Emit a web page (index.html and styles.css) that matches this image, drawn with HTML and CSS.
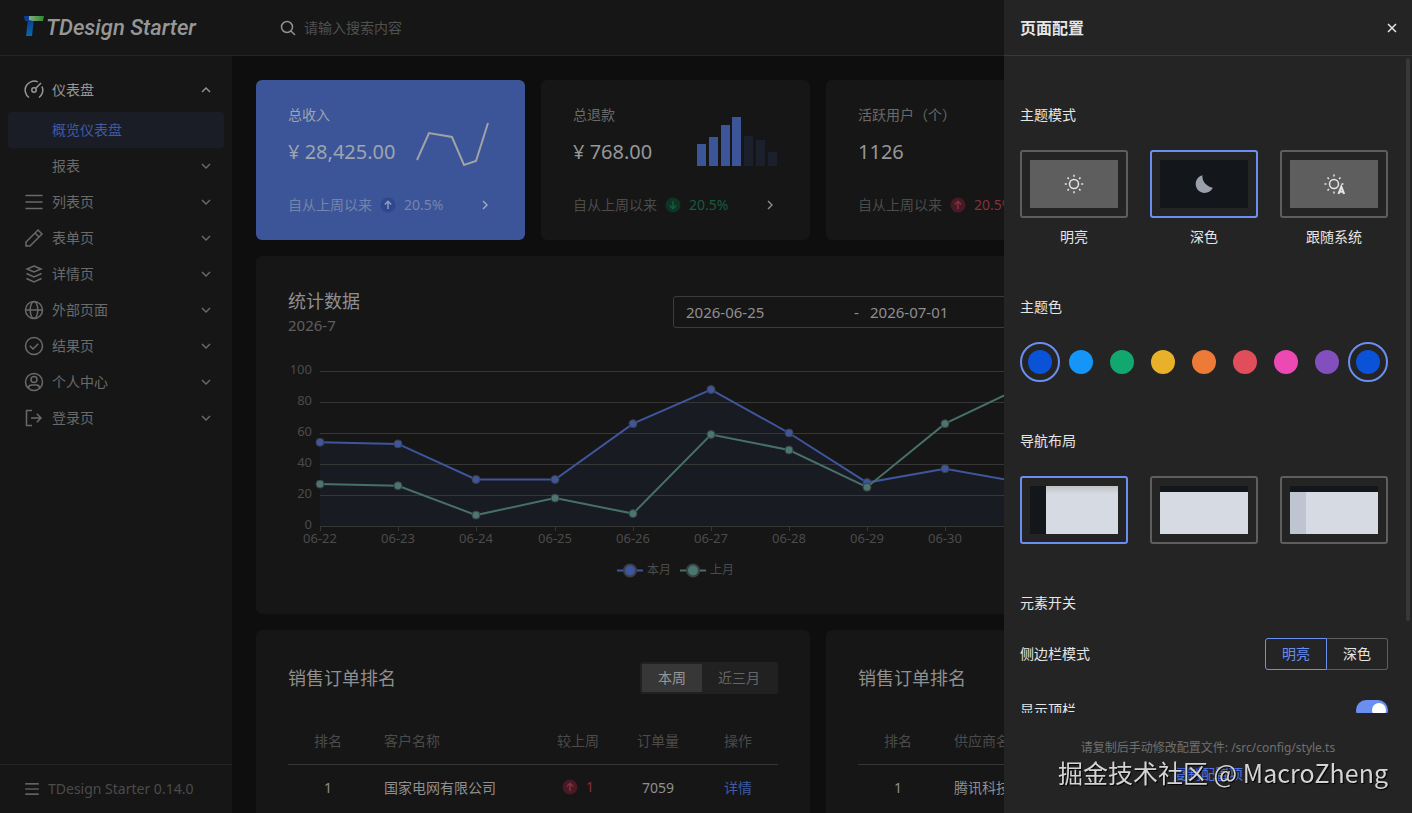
FILE: index.html
```html
<!DOCTYPE html>
<html lang="zh-CN">
<head>
    <meta charset="UTF-8">
    <meta name="viewport" content="width=device-width, initial-scale=1.0">
    <title>TDesign Starter</title>
    <link rel="stylesheet" href="styles.css">
</head>
<body>
    <svg class="sprite" aria-hidden="true">
        <symbol id="i-down" viewBox="0 0 16 16"><path d="M4 6l4 4 4-4"/></symbol>
        <symbol id="i-up" viewBox="0 0 16 16"><path d="M4 10l4-4 4 4"/></symbol>
        <symbol id="i-right" viewBox="0 0 16 16"><path d="M6 4l4 4-4 4"/></symbol>
        <symbol id="i-menu" viewBox="0 0 20 20"><path d="M1.500 3.500h17M1.500 10h17M1.500 16.500h17"/></symbol>
        <symbol id="i-arrow-up" viewBox="0 0 16 16"><circle cx="8" cy="8" r="7.500" class="disc"/><path d="M8 12V4.500M4.800 7.500L8 4.300l3.200 3.200"/></symbol>
        <symbol id="i-arrow-down" viewBox="0 0 16 16"><circle cx="8" cy="8" r="7.500" class="disc"/><path d="M8 4v7.500M4.800 8.500L8 11.700l3.200-3.200"/></symbol>
        <symbol id="i-sun" viewBox="0 0 20 20"><circle cx="10" cy="10" r="4.500"/><path d="M10 .8v2M10 17.200v2M.8 10h2M17.200 10h2M3.500 3.500l1.400 1.400M15.100 15.100l1.400 1.400M3.500 16.500l1.400-1.400M15.100 4.900l1.400-1.400"/></symbol>
    </svg>

    <header class="header">
        <a class="logo" href="#">
            <svg width="22" height="24" viewBox="0 0 22 24" aria-hidden="true">
                <defs>
                    <linearGradient id="stem" x1="0" y1="0" x2="0" y2="1">
                        <stop offset="0" stop-color="#0f3a94"/>
                        <stop offset="1" stop-color="#0a68a8"/>
                    </linearGradient>
                    <linearGradient id="bar" x1="0" y1="0" x2="1" y2="0">
                        <stop offset="0" stop-color="#86a886"/>
                        <stop offset="1" stop-color="#2c8a28"/>
                    </linearGradient>
                </defs>
                <path d="M0 0h7v5H1z" fill="#0b3e92"/>
                <path d="M4 3h6L8 20H2z" fill="url(#stem)"/>
                <path d="M5 0h15l-1 5H9L5 4z" fill="url(#bar)"/>
            </svg>
            <span>TDesign Starter</span>
        </a>
        <label class="search">
            <svg width="16" height="16" viewBox="0 0 16 16" aria-hidden="true"><circle cx="7" cy="7" r="5.500"/><path d="M11 11l4 4"/></svg>
            <input type="text" placeholder="请输入搜索内容" aria-label="请输入搜索内容">
        </label>
    </header>

    <div class="layout">
        <aside class="sidebar">
            <nav class="menu">
                <a class="menu-item open" href="#">
                    <svg class="icon" viewBox="0 0 20 20"><path d="M5 17.500A9 9 0 0 1 13.800 1.900M18 6.500a9 9 0 0 1-3 11M11.500 8.500L17 3"/><circle cx="10" cy="10" r="2.200"/></svg>
                    <span>仪表盘</span>
                    <svg class="chevron"><use href="#i-up"/></svg>
                </a>
                <a class="menu-item sub active" href="#"><span>概览仪表盘</span></a>
                <a class="menu-item sub" href="#"><span>报表</span><svg class="chevron"><use href="#i-down"/></svg></a>
                <a class="menu-item" href="#">
                    <svg class="icon"><use href="#i-menu"/></svg>
                    <span>列表页</span>
                    <svg class="chevron"><use href="#i-down"/></svg>
                </a>
                <a class="menu-item" href="#">
                    <svg class="icon" viewBox="0 0 20 20"><path d="M2 18v-4L14 2l4 4L6 18zM11 5l4 4"/></svg>
                    <span>表单页</span>
                    <svg class="chevron"><use href="#i-down"/></svg>
                </a>
                <a class="menu-item" href="#">
                    <svg class="icon" viewBox="0 0 20 20"><path d="M10 2l7 3-7 3-7-3zM2.500 9.500L10 13l7.500-3.500M2.500 14.500L10 18l7.500-3.500"/></svg>
                    <span>详情页</span>
                    <svg class="chevron"><use href="#i-down"/></svg>
                </a>
                <a class="menu-item" href="#">
                    <svg class="icon" viewBox="0 0 20 20"><circle cx="10" cy="10" r="8.500"/><ellipse cx="10" cy="10" rx="3.800" ry="8.500"/><path d="M1.500 10h17"/></svg>
                    <span>外部页面</span>
                    <svg class="chevron"><use href="#i-down"/></svg>
                </a>
                <a class="menu-item" href="#">
                    <svg class="icon" viewBox="0 0 20 20"><circle cx="10" cy="10" r="8.500"/><path d="M5.800 9.800L9 13l5.300-5.300"/></svg>
                    <span>结果页</span>
                    <svg class="chevron"><use href="#i-down"/></svg>
                </a>
                <a class="menu-item" href="#">
                    <svg class="icon" viewBox="0 0 20 20"><circle cx="10" cy="10" r="8.500"/><circle cx="10" cy="7.500" r="3"/><path d="M4.500 16.300c0-2.500 1.500-3.300 3-3.300h5c1.500 0 3 .8 3 3.300"/></svg>
                    <span>个人中心</span>
                    <svg class="chevron"><use href="#i-down"/></svg>
                </a>
                <a class="menu-item" href="#">
                    <svg class="icon" viewBox="0 0 20 20"><path d="M8 2.500H2.500v15H8M7 10h10M12.800 5.800L17 10l-4.200 4.200"/></svg>
                    <span>登录页</span>
                    <svg class="chevron"><use href="#i-down"/></svg>
                </a>
            </nav>
            <div class="sidebar-footer">
                <svg class="icon-small"><use href="#i-menu"/></svg>
                <span>TDesign Starter 0.14.0</span>
            </div>
        </aside>

        <main class="content">
            <section class="cards">
                <div class="card stat primary">
                    <div class="stat-top">
                        <div>
                            <div class="stat-title">总收入</div>
                            <div class="stat-value">¥ 28,425.00</div>
                        </div>
                        <svg width="80" height="50" viewBox="0 0 80 50"><polyline class="spark" points="4,44 16,17 39,21 51,49 63,45 75,7"/></svg>
                    </div>
                    <div class="stat-foot">
                        <span>自从上周以来</span>
                        <svg class="trend"><use href="#i-arrow-up"/></svg>
                        <span class="percent">20.5%</span>
                        <svg class="chevron"><use href="#i-right"/></svg>
                    </div>
                </div>
                <div class="card stat">
                    <div class="stat-top">
                        <div>
                            <div class="stat-title">总退款</div>
                            <div class="stat-value">¥ 768.00</div>
                        </div>
                        <svg width="81" height="50" viewBox="0 0 81 50">
                            <path class="bars" d="M0 28h9v22H0zM12 21h9v29h-9zM24 9h9v41h-9zM35 1h9v49h-9z"/>
                            <path class="bars-dim" d="M47 20h9v30h-9zM59 24h9v26h-9zM71 36h9v14h-9z"/>
                        </svg>
                    </div>
                    <div class="stat-foot down">
                        <span>自从上周以来</span>
                        <svg class="trend"><use href="#i-arrow-down"/></svg>
                        <span class="percent">20.5%</span>
                        <svg class="chevron"><use href="#i-right"/></svg>
                    </div>
                </div>
                <div class="card stat">
                    <div class="stat-top">
                        <div>
                            <div class="stat-title">活跃用户（个）</div>
                            <div class="stat-value">1126</div>
                        </div>
                    </div>
                    <div class="stat-foot up">
                        <span>自从上周以来</span>
                        <svg class="trend"><use href="#i-arrow-up"/></svg>
                        <span class="percent">20.5%</span>
                    </div>
                </div>
            </section>

            <section class="charts">
                <div class="card">
                    <div class="card-head chart-head">
                        <div>
                            <h2>统计数据</h2>
                            <div class="subtitle">2026-7</div>
                        </div>
                        <div class="range">
                            <input type="text" value="2026-06-25" aria-label="开始日期">
                            <span>-</span>
                            <input type="text" value="2026-07-01" aria-label="结束日期">
                        </div>
                    </div>
                    <svg class="chart" viewBox="0 0 775 246" role="img" aria-label="统计数据">
                        <path class="area" d="M32 106.300L110 107.900 188 143.500H267L345 87.700 423 53.600 501 97 579 146.600 657 132.700 735 146.600V190H32z"/>
                        <path class="grid" d="M32 35.500H735M32 66.500H735M32 97.500H735M32 128.500H735M32 159.500H735"/>
                        <path class="axis" d="M32 190.500H735M32.500 190v5M110.500 190v5M188.500 190v5M267.500 190v5M345.500 190v5M423.500 190v5M501.500 190v5M579.500 190v5M657.500 190v5M735.500 190v5"/>
                        <g class="y-labels">
                            <text x="24" y="38">100</text>
                            <text x="24" y="69">80</text>
                            <text x="24" y="100">60</text>
                            <text x="24" y="131">40</text>
                            <text x="24" y="162">20</text>
                            <text x="24" y="193">0</text>
                        </g>
                        <g class="x-labels">
                            <text x="32" y="207">06-22</text>
                            <text x="110" y="207">06-23</text>
                            <text x="188" y="207">06-24</text>
                            <text x="267" y="207">06-25</text>
                            <text x="345" y="207">06-26</text>
                            <text x="423" y="207">06-27</text>
                            <text x="501" y="207">06-28</text>
                            <text x="579" y="207">06-29</text>
                            <text x="657" y="207">06-30</text>
                        </g>
                        <g class="series-a">
                            <polyline points="32,106.300 110,107.900 188,143.500 267,143.500 345,87.700 423,53.600 501,97 579,146.600 657,132.700 735,146.600"/>
                            <circle cx="32" cy="106.300" r="4"/><circle cx="110" cy="107.900" r="4"/><circle cx="188" cy="143.500" r="4"/><circle cx="267" cy="143.500" r="4"/><circle cx="345" cy="87.700" r="4"/><circle cx="423" cy="53.600" r="4"/><circle cx="501" cy="97" r="4"/><circle cx="579" cy="146.600" r="4"/><circle cx="657" cy="132.700" r="4"/>
                            <path d="M329 234.500h26"/><circle class="key" cx="342" cy="234.500" r="6"/>
                        </g>
                        <g class="series-b">
                            <polyline points="32,148.100 110,149.700 188,179.100 267,162.100 345,177.600 423,98.500 501,114 579,151.200 657,87.700 735,50.500"/>
                            <circle cx="32" cy="148.100" r="4"/><circle cx="110" cy="149.700" r="4"/><circle cx="188" cy="179.100" r="4"/><circle cx="267" cy="162.100" r="4"/><circle cx="345" cy="177.600" r="4"/><circle cx="423" cy="98.500" r="4"/><circle cx="501" cy="114" r="4"/><circle cx="579" cy="151.200" r="4"/><circle cx="657" cy="87.700" r="4"/>
                            <path d="M392 234.500h26"/><circle class="key" cx="405" cy="234.500" r="6"/>
                        </g>
                        <g class="legend">
                            <text x="359" y="238">本月</text>
                            <text x="422" y="238">上月</text>
                        </g>
                    </svg>
                </div>
            </section>

            <section class="ranks">
                <div class="card">
                    <div class="card-head">
                        <h2>销售订单排名</h2>
                        <div class="tabs">
                            <button class="on">本周</button>
                            <button>近三月</button>
                        </div>
                    </div>
                    <table>
                        <colgroup><col class="col-s"><col><col class="col-s"><col class="col-s"><col class="col-s"></colgroup>
                        <thead>
                            <tr><th>排名</th><th class="left">客户名称</th><th>较上周</th><th>订单量</th><th>操作</th></tr>
                        </thead>
                        <tbody>
                            <tr>
                                <td>1</td>
                                <td class="left">国家电网有限公司</td>
                                <td><span class="diff"><svg class="trend"><use href="#i-arrow-up"/></svg>1</span></td>
                                <td>7059</td>
                                <td><a href="#">详情</a></td>
                            </tr>
                        </tbody>
                    </table>
                </div>
                <div class="card">
                    <div class="card-head">
                        <h2>销售订单排名</h2>
                    </div>
                    <table>
                        <colgroup><col class="col-s"><col></colgroup>
                        <thead>
                            <tr><th>排名</th><th class="left">供应商名称</th></tr>
                        </thead>
                        <tbody>
                            <tr><td>1</td><td class="left">腾讯科技</td></tr>
                        </tbody>
                    </table>
                </div>
            </section>
        </main>
    </div>

    <aside class="drawer">
        <div class="drawer-head">
            <h1>页面配置</h1>
            <button class="close" aria-label="关闭"><svg width="16" height="16" viewBox="0 0 16 16"><path d="M4 4l8 8M12 4l-8 8"/></svg></button>
        </div>
        <div class="drawer-body">
            <h3>主题模式</h3>
            <div class="options">
                <label class="option">
                    <input type="radio" name="mode">
                    <span class="frame"><span class="thumb gray"><svg width="20" height="20"><use href="#i-sun"/></svg></span></span>
                    <span>明亮</span>
                </label>
                <label class="option">
                    <input type="radio" name="mode" checked>
                    <span class="frame"><span class="thumb night"><svg width="20" height="20" viewBox="0 0 20 20"><path class="moon" d="M8.500 1.200c-.8 6 4 11.300 10.300 12.600A9 9 0 1 1 8.500 1.200z"/></svg></span></span>
                    <span>深色</span>
                </label>
                <label class="option">
                    <input type="radio" name="mode">
                    <span class="frame"><span class="thumb gray"><svg width="22" height="22" viewBox="0 0 22 22"><circle cx="11" cy="11" r="4.500"/><path d="M11 1.500v2M11 18.500v2M1.500 11h2M18.500 11h2M4.500 4.500l1.400 1.400M4.500 17.500l1.400-1.400M16.100 5.900l1.400-1.400"/><path class="auto" d="M15.500 21l2.800-7.500 2.800 7.500M16.300 18.700h4"/></svg></span></span>
                    <span>跟随系统</span>
                </label>
            </div>

            <h3>主题色</h3>
            <div class="swatches">
                <button class="on" aria-label="#0052d9"><i class="blue"></i></button>
                <button aria-label="#0594fa"><i class="sky"></i></button>
                <button aria-label="#00a870"><i class="green"></i></button>
                <button aria-label="#ebb105"><i class="yellow"></i></button>
                <button aria-label="#ed7b2f"><i class="orange"></i></button>
                <button aria-label="#e34d59"><i class="red"></i></button>
                <button aria-label="#ed49b4"><i class="pink"></i></button>
                <button aria-label="#834ec2"><i class="purple"></i></button>
                <button class="on" aria-label="自定义"><i class="blue"></i></button>
            </div>

            <h3>导航布局</h3>
            <div class="options">
                <label class="option">
                    <input type="radio" name="nav" aria-label="侧边导航" checked>
                    <span class="frame"><span class="thumb nav-side"></span></span>
                </label>
                <label class="option">
                    <input type="radio" name="nav" aria-label="顶部导航">
                    <span class="frame"><span class="thumb nav-top"></span></span>
                </label>
                <label class="option">
                    <input type="radio" name="nav" aria-label="混合导航">
                    <span class="frame"><span class="thumb nav-mix"></span></span>
                </label>
            </div>

            <h3>元素开关</h3>
            <div class="row">
                <span>侧边栏模式</span>
                <div class="group">
                    <button class="on">明亮</button>
                    <button>深色</button>
                </div>
            </div>
            <div class="row">
                <label for="showHeader">显示顶栏</label>
                <input type="checkbox" id="showHeader" class="switch" checked>
            </div>
        </div>
        <div class="drawer-foot">
            <p>请复制后手动修改配置文件: /src/config/style.ts</p>
            <button>复制配置项</button>
        </div>
        <div class="scrollbar"></div>
    </aside>

    <div class="watermark">掘金技术社区 @ MacroZheng</div>
</body>
</html>
```

FILE: styles.css
```css
* {
    box-sizing: border-box;
}
body {
    margin: 0;
    height: 100vh;
    display: flex;
    flex-direction: column;
    overflow: hidden;
    background: #0e0e0e;
    color: #8f8f8f;
    font-family: "Noto Sans", "Noto Sans CJK SC", sans-serif;
    font-size: 14px;
    line-height: 22px;
}
h1, h2, h3, p {
    margin: 0;
    font-weight: 400;
}
a {
    color: inherit;
    text-decoration: none;
}
button, input {
    margin: 0;
    padding: 0;
    border: 0;
    background: none;
    color: inherit;
    font: inherit;
}
button {
    cursor: pointer;
}
svg {
    flex: none;
    fill: none;
    stroke: currentColor;
    stroke-width: 1.5;
}
.sprite {
    position: absolute;
    width: 0;
    height: 0;
}

/* header */
.header {
    flex: none;
    height: 56px;
    display: flex;
    align-items: center;
    background: #161616;
    border-bottom: 1px solid #242424;
}
.logo {
    width: 256px;
    padding-left: 24px;
    display: flex;
    align-items: center;
    color: #979797;
    font-family: Roboto, sans-serif;
    font-size: 22px;
    font-style: italic;
    font-weight: 500;
}
.logo svg {
    stroke: none;
}
.search {
    display: flex;
    align-items: center;
    gap: 8px;
    padding-left: 24px;
    color: #919191;
}
.search input::placeholder {
    color: #505050;
    opacity: 1;
}

/* sidebar */
.layout {
    flex: 1;
    min-height: 0;
    display: flex;
}
.sidebar {
    flex: none;
    width: 232px;
    display: flex;
    flex-direction: column;
    background: #161616;
}
.menu {
    flex: 1;
    padding: 16px 8px;
}
.menu-item {
    display: flex;
    align-items: center;
    height: 36px;
    padding: 0 10px 0 16px;
    gap: 8px;
    border-radius: 3px;
    color: #6a6a6a;
}
.menu-item.open {
    margin-bottom: 4px;
    color: #979797;
}
.menu-item.sub {
    padding-left: 44px;
}
.menu-item.active {
    background: #1a1d26;
    color: #3f5aa3;
}
.icon {
    width: 20px;
    height: 20px;
}
.chevron {
    width: 16px;
    height: 16px;
    margin-left: auto;
    stroke-width: 1.4;
}
.sidebar-footer {
    display: flex;
    align-items: center;
    gap: 8px;
    height: 49px;
    padding-left: 24px;
    border-top: 1px solid #242424;
    color: #4b4b4b;
}
.icon-small {
    width: 16px;
    height: 16px;
    color: #7d7d7d;
}

/* content */
.content {
    flex: 1;
    min-width: 0;
    display: flex;
    flex-direction: column;
    gap: 16px;
    padding: 24px 32px 0 24px;
    overflow: hidden;
}
.cards {
    display: grid;
    grid-template-columns: repeat(4, 1fr);
    gap: 16px;
}
.charts {
    display: grid;
    grid-template-columns: repeat(4, 1fr);
    gap: 16px;
}
.charts .card {
    grid-column: span 3;
}
.ranks {
    display: grid;
    grid-template-columns: repeat(2, 1fr);
    gap: 16px;
}
.card {
    padding: 32px;
    border-radius: 6px;
    background: #161616;
}
.card.stat {
    padding: 24px 32px;
}
.card.primary {
    background: #3c5598;
}
.stat-top {
    display: flex;
    justify-content: space-between;
    align-items: flex-end;
    margin-bottom: 28px;
}
.stat-title {
    margin-bottom: 12px;
    color: #6a6a6a;
}
.stat-value {
    font-size: 20px;
    line-height: 28px;
    white-space: nowrap;
    color: #979797;
}
.primary .stat-title,
.primary .stat-value,
.primary .chevron {
    color: #9ea4b0;
}
.spark {
    stroke: #a0a3a6;
    stroke-width: 2;
}
.bars {
    fill: #3c5598;
    stroke: none;
}
.bars-dim {
    fill: #1c1f2c;
    stroke: none;
}
.stat-foot {
    display: flex;
    align-items: center;
    gap: 8px;
    color: #4b4b4b;
}
.stat-foot .chevron {
    color: #8f8f8f;
}
.primary .stat-foot {
    color: #7485ac;
}
.primary .stat-foot .chevron {
    color: #a5adbd;
}
.trend {
    width: 16px;
    height: 16px;
}
.disc {
    fill: inherit;
    stroke: none;
}
.down .trend,
.down .percent {
    color: #155c3e;
}
.down .trend {
    fill: #0f3423;
}
.up .trend,
.up .percent,
.diff {
    color: #85303d;
}
.primary .trend {
    color: #8f9cbc;
    fill: #2f478f;
}
.up .trend,
.diff .trend {
    fill: #471a25;
}

.card-head {
    display: flex;
    justify-content: space-between;
    align-items: center;
    min-height: 32px;
    margin-bottom: 24px;
}
.card-head h2 {
    font-size: 18px;
    line-height: 26px;
}
.chart-head {
    margin-bottom: 0;
}
.subtitle {
    font-size: 15px;
    color: #5e5e5e;
}
.range {
    width: 50%;
    min-width: 390px;
    height: 32px;
    display: flex;
    align-items: center;
    padding: 0 24px 0 12px;
    border: 1px solid #3c3c3c;
    border-radius: 3px;
    font-size: 15px;
}
.range span {
    width: 16px;
}
.range input {
    flex: 1;
    min-width: 0;
}
.chart {
    display: block;
    width: 100%;
    height: auto;
}
.chart text {
    fill: #4b4b4b;
    stroke: none;
    font-size: 13px;
}
.chart .legend text {
    font-size: 12px;
}
.y-labels {
    text-anchor: end;
}
.x-labels {
    text-anchor: middle;
}
.grid, .axis {
    stroke: #363636;
    stroke-width: 1;
}
.area {
    fill: #181b21;
    stroke: none;
}
.series-a, .series-b {
    stroke: #3f559c;
    stroke-width: 2;
}
.series-b {
    stroke: #47706a;
}
.series-a circle, .series-b circle {
    fill: #3f559c;
    stroke: #3a4048;
    stroke-width: 1;
}
.series-b circle {
    fill: #4a766e;
}
.series-a .key, .series-b .key {
    stroke-width: 2;
}

.tabs {
    display: flex;
    padding: 2px;
    border-radius: 3px;
    background: #212121;
}
.tabs button {
    height: 28px;
    padding: 0 16px;
    color: #666666;
}
.tabs .on {
    background: #373737;
    color: #979797;
}
table {
    width: 100%;
    border-collapse: collapse;
    table-layout: fixed;
}
.col-s {
    width: 80px;
}
th, td {
    height: 48px;
    padding: 0;
    font-weight: 400;
    text-align: center;
    white-space: nowrap;
}
th {
    height: 46px;
    border-bottom: 1px solid #363636;
    color: #4b4b4b;
}
.left {
    padding-left: 16px;
    text-align: left;
}
td a {
    color: #3f5aa3;
}
.diff {
    display: inline-flex;
    align-items: center;
    gap: 8px;
}

/* drawer */
.drawer {
    position: fixed;
    top: 0;
    right: 0;
    bottom: 0;
    width: 408px;
    display: flex;
    flex-direction: column;
    background: #242424;
    color: #e6e6e6;
}
.drawer-head {
    flex: none;
    display: flex;
    align-items: center;
    justify-content: space-between;
    height: 56px;
    padding: 0 12px 0 16px;
    border-bottom: 1px solid #383838;
}
.drawer-head h1 {
    font-size: 16px;
    font-weight: 700;
}
.close {
    display: flex;
}
.drawer-body {
    flex: 1;
    min-height: 0;
    padding: 0 24px 0 16px;
    overflow: hidden;
}
.drawer-body h3 {
    margin: 48px 0 24px;
    font-size: 14px;
}
.options {
    display: flex;
    justify-content: space-between;
}
.option {
    display: flex;
    flex-direction: column;
    align-items: center;
    gap: 8px;
}
.option input {
    position: absolute;
    opacity: 0;
}
.frame {
    padding: 8px;
    border: 2px solid #5e5e5e;
    border-radius: 3px;
}
.option input:checked + .frame {
    border-color: #6b8ff0;
}
.thumb {
    display: flex;
    align-items: center;
    justify-content: center;
    width: 88px;
    height: 48px;
}
.gray {
    background: #5e5e5e;
}
.night {
    background: #13161b;
}
.moon {
    fill: #9ba1ab;
    stroke: none;
}
.auto {
    stroke-width: 2;
}
.nav-side {
    background: linear-gradient(90deg, #13161a 16px, transparent 16px), linear-gradient(#bfc1c3, #d6dbe3 8px);
}
.nav-top {
    background: linear-gradient(#13161a 6px, #d6dbe3 6px);
}
.nav-mix {
    background: linear-gradient(#13161a 6px, transparent 6px), linear-gradient(90deg, #bfc4d2 16px, #d6dbe3 16px);
}
.swatches {
    display: flex;
    justify-content: space-between;
}
.swatches button {
    display: flex;
    align-items: center;
    justify-content: center;
    width: 40px;
    height: 40px;
    border: 2px solid transparent;
    border-radius: 50%;
}
.swatches .on {
    border-color: #6b8ff0;
}
.swatches i {
    width: 24px;
    height: 24px;
    border-radius: 50%;
}
.blue { background: #0a53d8; }
.sky { background: #1595f8; }
.green { background: #12a76f; }
.yellow { background: #e9b12a; }
.orange { background: #ed7b37; }
.red { background: #e04d5b; }
.pink { background: #ec49b3; }
.purple { background: #824fbe; }

.row {
    display: flex;
    align-items: center;
    justify-content: space-between;
    height: 32px;
    margin-bottom: 24px;
}
.group {
    display: flex;
}
.group button {
    height: 32px;
    padding: 0 16px;
    border: 1px solid #5e5e5e;
    border-left: 0;
    border-radius: 0 3px 3px 0;
}
.group .on {
    border: 1px solid #6b8ff0;
    border-radius: 3px 0 0 3px;
    color: #6b8ff0;
}
.switch {
    appearance: none;
    width: 32px;
    height: 20px;
    padding: 3px 2px;
    border-radius: 10px;
    background: #6b8ff0;
}
.switch::before {
    content: "";
    display: block;
    width: 14px;
    height: 14px;
    margin-left: auto;
    border-radius: 50%;
    background: #ffffff;
}
.drawer-foot {
    flex: none;
    height: 100px;
    padding-top: 24px;
    text-align: center;
}
.drawer-foot p {
    margin-bottom: 4px;
    font-size: 12px;
    color: #707070;
}
.drawer-foot button {
    color: #4d73e6;
}
.scrollbar {
    position: absolute;
    top: 58px;
    right: 2px;
    width: 4px;
    height: calc(100% - 250px);
    border-radius: 2px;
    background: #383838;
}
.watermark {
    position: fixed;
    right: 24px;
    bottom: 22px;
    font-family: "Noto Sans CJK SC", sans-serif;
    font-size: 25px;
    line-height: 38px;
    color: #d4d4d4;
    text-shadow: 1px 1px 1px #000000;
    pointer-events: none;
}
```
